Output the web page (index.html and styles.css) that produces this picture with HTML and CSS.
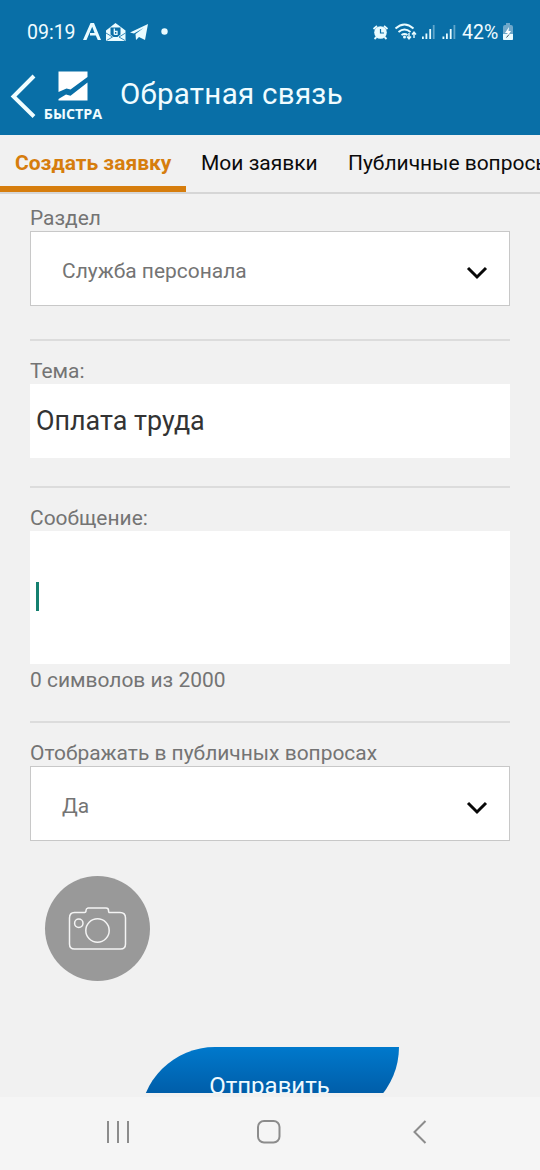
FILE: index.html
```html
<!DOCTYPE html>
<html lang="ru">
<head>
<meta charset="utf-8">
<title>Обратная связь</title>
<link rel="stylesheet" href="styles.css">
</head>
<body>
<div class="screen">
  <header class="header">
    <div class="status">
      <span class="status-time">09:19</span>
      <svg class="status-apps" width="90" height="24" viewBox="80 20 90 24" fill="#e9fbff">
        <path d="M83 40 90.500 23h3.500l7 17h-3.200l-2-4.500H90V33h4.600l-2.400-6.200L86.500 40z"/>
        <path d="M106 30.500 115.500 23l10 7.500V41H106z"/>
        <path d="M106 33l6.500 4-6 3.500M125.500 33l-6.500 4 6 3.500" fill="none" stroke="#096fa7" stroke-width=".8"/>
        <path d="M110.500 27.500h10v7l-3 2.500h-4l-3-2.500z" fill="#096fa7"/>
        <path d="M114.300 28.500v6M114.300 31.300h2.700v3h-2.700" fill="none" stroke="#e9fbff" stroke-width="1.300"/>
        <path d="M130 32.500 148 24l-3 16-6-3-3 3-.5-6 8-6-9.500 5.500z"/>
        <circle cx="164.500" cy="31.500" r="3.200"/>
      </svg>
      <svg class="status-signal" width="88" height="24" viewBox="370 20 88 24" fill="#e9fbff">
        <circle cx="380.500" cy="32.500" r="6.300"/>
        <path d="M373.500 29 377 26M387.500 29 384 26M376.500 37l-2 2M384.500 37l2 2" stroke="#e9fbff" stroke-width="1.800"/>
        <path d="M380.500 29v4h3.500" fill="none" stroke="#096fa7" stroke-width="1.200"/>
        <path d="M395.500 28.500q9-8 18 0M398.500 32q6-5 12 0M401.500 35q3-2 6 0" fill="none" stroke="#e9fbff" stroke-width="1.900"/>
        <circle cx="404.500" cy="37" r="1.500"/>
        <path d="M409 33v6M407 36.500l2 2.500 2-2.500M414 38v-6M412 34.500l2-2.500 2 2.500" fill="none" stroke="#e9fbff" stroke-width="1.400"/>
        <path d="M422 36.500h1.800V39H422zM425.500 33.500h1.800V39h-1.800zM429.300 29h1.800v10h-1.800zM442.500 36.500h1.800V39h-1.800zM446 33.500h1.800V39H446zM449.800 29h1.800v10h-1.800z"/>
        <path d="M432.800 25h1.800v14h-1.800zM453.500 25h1.800v14h-1.800z" opacity=".4"/>
      </svg>
      <span class="status-percent">42%</span>
      <svg class="status-battery" width="12" height="18" viewBox="0 0 12 18">
        <path d="M3 2h1V0h4v2h1q2 0 2 2v12q0 1-1 1H2q-1 0-1-1V4q0-2 2-2z" fill="#6fa8ca"/>
        <path d="M1 11h10v5q0 1-1 1H2q-1 0-1-1z" fill="#e9fbff"/>
        <path d="M7 4 3 10h2.500L5 14l4-6H6.500z" fill="#fff"/><path d="m4.500 14.500 2.500-3" stroke="#40515e"/>
      </svg>
    </div>
    <div class="titlebar">
      <svg class="back" width="28" height="48" viewBox="0 0 28 48"><path d="M26 4 5.500 24.500 26 44.500" fill="none" stroke="#f0fdff" stroke-width="4"/></svg>
      <div class="brand">
        <svg width="30" height="30" viewBox="0 0 30 30" fill="#fff"><path d="M.500.500h29V6L12.500 18.500l-4-1-8 3.500z"/><path d="M29.500 11.500v18h-29V28l7.500-4.500 4.500 1.200z"/></svg>
        <span class="brand-name">БЫСТРА</span>
      </div>
      <h1 class="title">Обратная связь</h1>
    </div>
  </header>
  <nav class="tabs">
    <span class="tab tab-active">Создать заявку</span>
    <span class="tab tab-mine">Мои заявки</span>
    <span class="tab tab-public">Публичные вопросы</span>
  </nav>
  <main class="form">
    <section class="group group-section">
      <div class="label">Раздел</div>
      <div class="select"><span>Служба персонала</span><svg width="22" height="15" viewBox="0 0 22 15"><path d="m2 2 9 9 9-9" fill="none" stroke="#080808" stroke-width="3"/></svg></div>
    </section>
    <section class="group group-subject">
      <div class="label">Тема:</div>
      <div class="input">Оплата труда</div>
    </section>
    <section class="group group-message">
      <div class="label">Сообщение:</div>
      <div class="textarea"><span class="caret"></span></div>
      <div class="counter">0 символов из 2000</div>
    </section>
    <section class="group group-visible">
      <div class="label">Отображать в публичных вопросах</div>
      <div class="select"><span>Да</span><svg width="22" height="15" viewBox="0 0 22 15"><path d="m2 2 9 9 9-9" fill="none" stroke="#080808" stroke-width="3"/></svg></div>
    </section>
    <div class="photo">
      <svg width="60" height="46" viewBox="0 0 60 46" fill="none" stroke="#f4f4f4" stroke-width="1.500"><path d="M6.500 6.500h10q1.500 0 1.500-2t2-2.500h18q2.500 0 2.500 2.500t1.500 2h10q5.500 0 5.500 5.500v26q0 5-5 5H6.500q-5 0-5-5V12q0-5.500 5-5.500z"/><circle cx="29.500" cy="24.500" r="11.700"/><circle cx="10.800" cy="17.200" r="4.200"/></svg>
    </div>
    <div class="submit">Отправить</div>
  </main>
  <footer class="navbar">
    <svg width="24" height="26" viewBox="0 0 24 26"><path d="M2 2v22M12 2v22M22 2v22" stroke="#8c8c8c" stroke-width="2"/></svg>
    <svg class="nav-home" width="26" height="26" viewBox="0 0 26 26"><rect x="2" y="2" width="21.500" height="21.500" rx="6" fill="none" stroke="#8c8c8c" stroke-width="2"/></svg>
    <svg width="16" height="26" viewBox="0 0 16 26"><path d="M13.500 2 2.500 13l11 11" fill="none" stroke="#8c8c8c" stroke-width="2"/></svg>
  </footer>
</div>
</body>
</html>
```

FILE: styles.css
```css
* { box-sizing: border-box; }
body { margin: 0; font-family: Roboto, "Noto Sans", sans-serif; background: #f1f1f1; }
svg { display: block; flex: none; }
.screen { width: 540px; height: 1170px; display: flex; flex-direction: column; overflow: hidden; }
.header { height: 135px; flex: none; background: #096fa7; color: #f0fcff; }
.status { height: 64px; display: flex; align-items: center; padding-left: 27px; font-size: 20px; }
.status-time { width: 53px; font-size: 19.5px; }
.status-signal { margin-left: 200px; }
.status-percent { width: 43px; margin-left: 4px; font-size: 19.5px; }
.status-battery { margin-left: -3px; }
.titlebar { height: 71px; display: flex; padding-left: 8px; }
.back { margin-top: 8px; }
.brand { width: 74px; display: flex; flex-direction: column; align-items: center; padding-top: 7px; }
.brand-name { margin-top: 5px; font: 700 14.3px/16px "Open Sans", sans-serif; }
.title { margin: 10px 0 0 10px; font-size: 29.5px; line-height: 40px; font-weight: 400; letter-spacing: .28px; }
.tabs { height: 59px; flex: none; display: flex; border-bottom: 2px solid #d6d6d6; font-size: 21px; line-height: 57px; color: #0b0b0b; white-space: nowrap; overflow: hidden; }
.tab { flex: none; padding-left: 15px; }
.tab-active { width: 186px; height: 57px; border-bottom: 6px solid #d67d0d; color: #d67d0d; font-weight: 700; }
.tab-mine { width: 147px; }
.tab-public { letter-spacing: -.03px; }
.form { flex: none; height: 899px; overflow: hidden; padding: 11px 30px 0; color: #747474; font-size: 20.95px; }
.group { border-bottom: 2px solid #dcdcdc; }
.label { height: 26px; line-height: 26px; white-space: nowrap; }
.group-section { height: 136px; }
.group-subject { height: 147px; padding-top: 17px; }
.group-message { height: 235px; padding-top: 17px; }
.group-visible { height: 119px; padding-top: 17px; border: 0; }
.select { height: 75px; display: flex; align-items: center; justify-content: space-between; background: #fff; border: 1px solid #c8c8c8; padding: 4px 21px 0 31px; }
.select svg { margin-top: 5px; }
.input { height: 74px; padding-left: 6px; background: #fff; color: #333; font-size: 26.9px; line-height: 75px; }
.textarea { height: 133px; padding: 51px 0 0 6px; background: #fff; }
.caret { display: block; width: 3px; height: 29px; background: #14806f; }
.counter { line-height: 32px; }
.photo { width: 105px; height: 105px; margin: 34px 0 0 15px; border-radius: 50%; background: #999; display: flex; align-items: center; justify-content: center; }
.submit { width: 259px; height: 75px; margin: 66px 0 0 110px; border-radius: 75px 0 75px 0; background: linear-gradient(#0079cc, #005ca7 65%); color: #effaff; font-size: 24px; line-height: 79px; text-align: center; }
.navbar { flex: 1; display: flex; align-items: flex-start; justify-content: space-between; padding: 22px 112px 0 106px; background: #f5f5f5; border-top: 4px solid #f1f1f1; }
.nav-home { margin-right: 5px; }
```
